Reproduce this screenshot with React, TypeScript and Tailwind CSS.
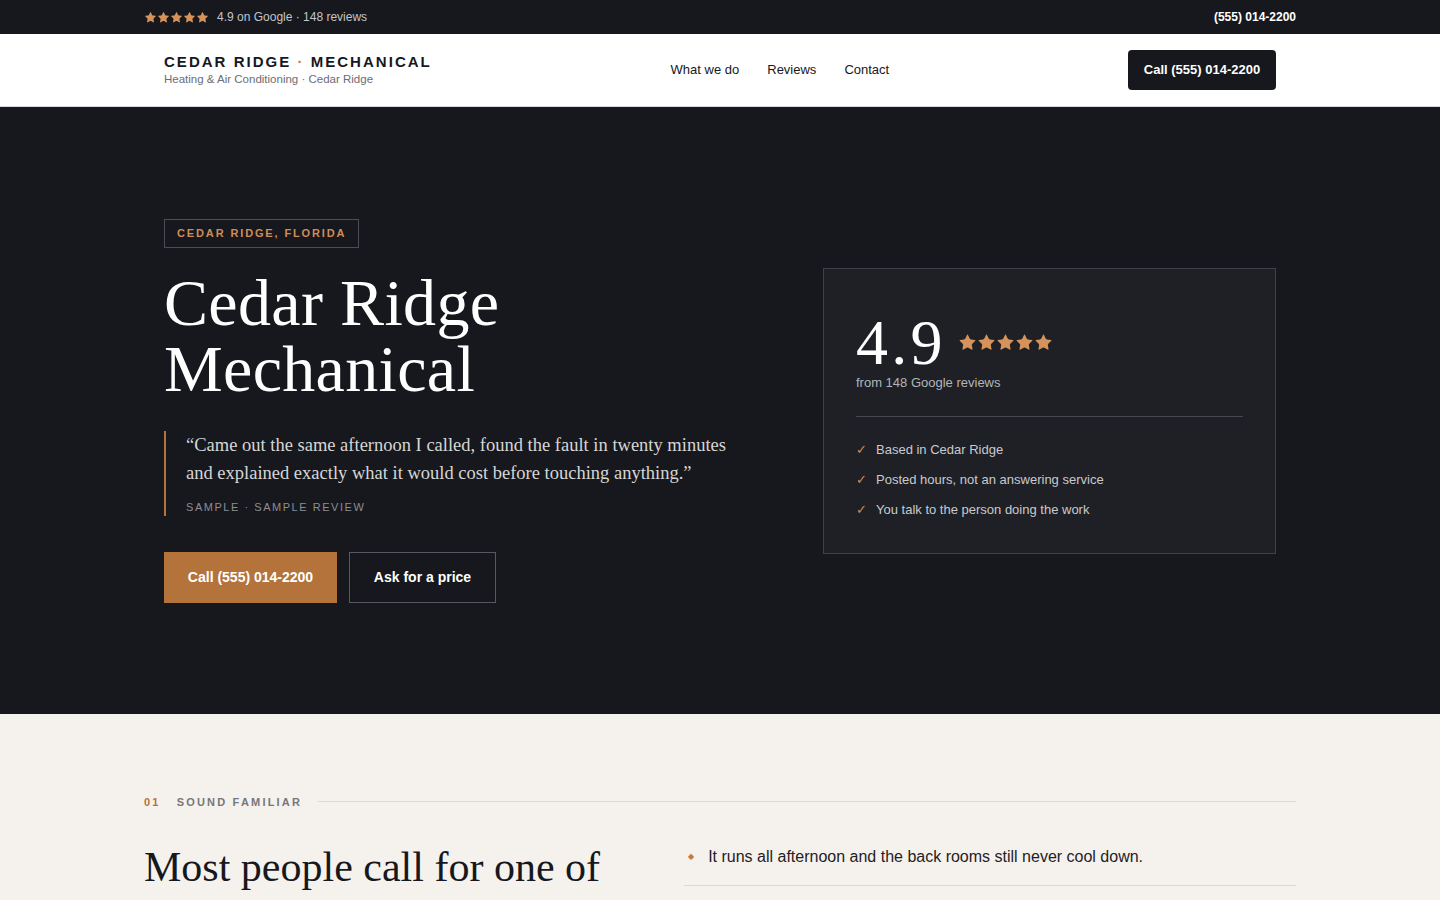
import { Star } from "lucide-react";

const sans = { fontFamily: '"Liberation Sans", Arial, sans-serif' };
const serif = "font-['Liberation_Serif',Georgia,serif]";

function Stars({ size }: { size: number }) {
    return (
        <div className="flex items-center">
            {[0, 1, 2, 3, 4].map((i) => (
                <Star key={i} width={size} height={size} strokeWidth={0} className="fill-[#d6925b]" />
            ))}
        </div>
    );
}

const checks = [
    "Based in Cedar Ridge",
    "Posted hours, not an answering service",
    "You talk to the person doing the work",
];

const problems = [
    "It runs all afternoon and the back rooms still never cool down.",
    "The bill jumped and nothing about the house changed.",
    "It makes a noise it didn't used to make.",
];

export default function App() {
    return (
        <div style={sans} className="min-h-screen bg-[#f5f2ed] text-[#16181d]">
            {/* top strip */}
            <div className="bg-[#16181d]">
                <div className="mx-auto flex h-[34px] max-w-[1152px] items-center justify-between">
                    <div className="flex items-center gap-2">
                        <Stars size={13} />
                        <span className="text-[12px] text-[#c4c5c8]">4.9 on Google · 148 reviews</span>
                    </div>
                    <span className="text-[12px] font-bold text-white">(555) 014-2200</span>
                </div>
            </div>

            {/* header */}
            <header className="border-b border-[#d9d9d9] bg-white">
                <div className="mx-auto flex h-[72px] max-w-[1152px] items-center justify-between px-5">
                    <div className="whitespace-nowrap">
                        <div className="text-[15px] font-bold leading-none tracking-[0.135em] text-[#16181d]">
                            CEDAR RIDGE <span className="text-[#c27a43]">·</span> MECHANICAL
                        </div>
                        <div className="mt-[5px] text-[11.5px] leading-none text-[#6b6d72]">
                            Heating &amp; Air Conditioning · Cedar Ridge
                        </div>
                    </div>
                    <nav className="flex items-center gap-7 whitespace-nowrap text-[13px] text-[#16181d]">
                        <a>What we do</a>
                        <a>Reviews</a>
                        <a>Contact</a>
                    </nav>
                    <button className="h-10 w-[148px] rounded-[4px] bg-[#16181d] text-[13px] font-bold text-white">
                        Call (555) 014-2200
                    </button>
                </div>
            </header>

            {/* hero */}
            <section className="bg-[#16181d]">
                <div className="mx-auto grid max-w-[1152px] grid-cols-[minmax(0,1fr)_453px] items-center gap-20 px-5 pb-[111px] pt-28">
                    <div>
                        <span className="inline-block border border-[#4a4d53] px-3 py-[7px] text-[11px] font-bold leading-[13px] tracking-[0.17em] text-[#d08c56]">
                            CEDAR RIDGE, FLORIDA
                        </span>
                        <h1 className={`${serif} mt-[22px] text-[66px] leading-[66px] tracking-[0.005em] text-white`}>
                            Cedar Ridge
                            <br />
                            Mechanical
                        </h1>
                        <blockquote className="mt-[29px] border-l-2 border-[#b5733c] pl-5">
                            <p className={`${serif} w-[550px] text-[18.5px] leading-[28px] text-[#d6d6d6]`}>
                                “Came out the same afternoon I called, found the fault in twenty minutes and explained exactly what it would cost before touching anything.”
                            </p>
                            <div className="mt-[12px] text-[11px] tracking-[0.14em] text-[#8c8e93]">
                                SAMPLE · SAMPLE REVIEW
                            </div>
                        </blockquote>
                        <div className="mt-9 flex gap-3">
                            <button className="h-[51px] w-[173px] bg-[#b5733c] text-[14px] font-bold text-white">
                                Call (555) 014-2200
                            </button>
                            <button className="h-[51px] w-[147px] border border-[#56595f] text-[14px] font-bold text-white">
                                Ask for a price
                            </button>
                        </div>
                    </div>

                    {/* rating card */}
                    <div className="border border-[#3e4147] bg-[#1e2026] px-8 pb-[34px] pt-12">
                        <div className="flex items-center gap-3">
                            <span className={`${serif} text-[64px] leading-[52px] tracking-[0.05em] text-white`}>4.9</span>
                            <Stars size={19} />
                        </div>
                        <div className="mt-[4px] text-[13px] text-[#b3b5b9]">from 148 Google reviews</div>
                        <div className="mt-[24px] border-t border-[#45484e]" />
                        <ul className="mt-[24px] space-y-[12px]">
                            {checks.map((c) => (
                                <li key={c} className="flex items-center gap-3 text-[13px] leading-[18px] text-[#c9cacd]">
                                    <span className="w-2 font-['DejaVu_Sans'] text-[13px] text-[#d08c56]">✓</span>
                                    {c}
                                </li>
                            ))}
                        </ul>
                    </div>
                </div>
            </section>

            {/* problems */}
            <section className="bg-[#f5f2ed]">
                <div className="mx-auto max-w-[1152px] pb-24 pt-20">
                    <div className="flex items-center gap-4 text-[11px] font-bold tracking-[0.2em]">
                        <span className="text-[#b5733c]">01</span>
                        <span className="text-[#75777b]">SOUND FAMILIAR</span>
                        <div className="h-px flex-1 bg-[#dedad3]" />
                    </div>
                    <div className="mt-8 grid grid-cols-[476px_1fr] gap-16">
                        <h2 className={`${serif} text-[42px] leading-[50px] text-[#16181d]`}>
                            Most people call for one of these four things.
                        </h2>
                        <ul>
                            {problems.map((t) => (
                                <li key={t} className="flex items-center gap-[14px] border-b border-[#dedad3] pb-4 pt-[3px] text-[16px] text-[#1f2125] [&+li]:pt-4">
                                    <span className="pl-1 font-['DejaVu_Sans'] text-[8px] text-[#c27a43]">◆</span>
                                    {t}
                                </li>
                            ))}
                        </ul>
                    </div>
                </div>
            </section>
        </div>
    );
}
